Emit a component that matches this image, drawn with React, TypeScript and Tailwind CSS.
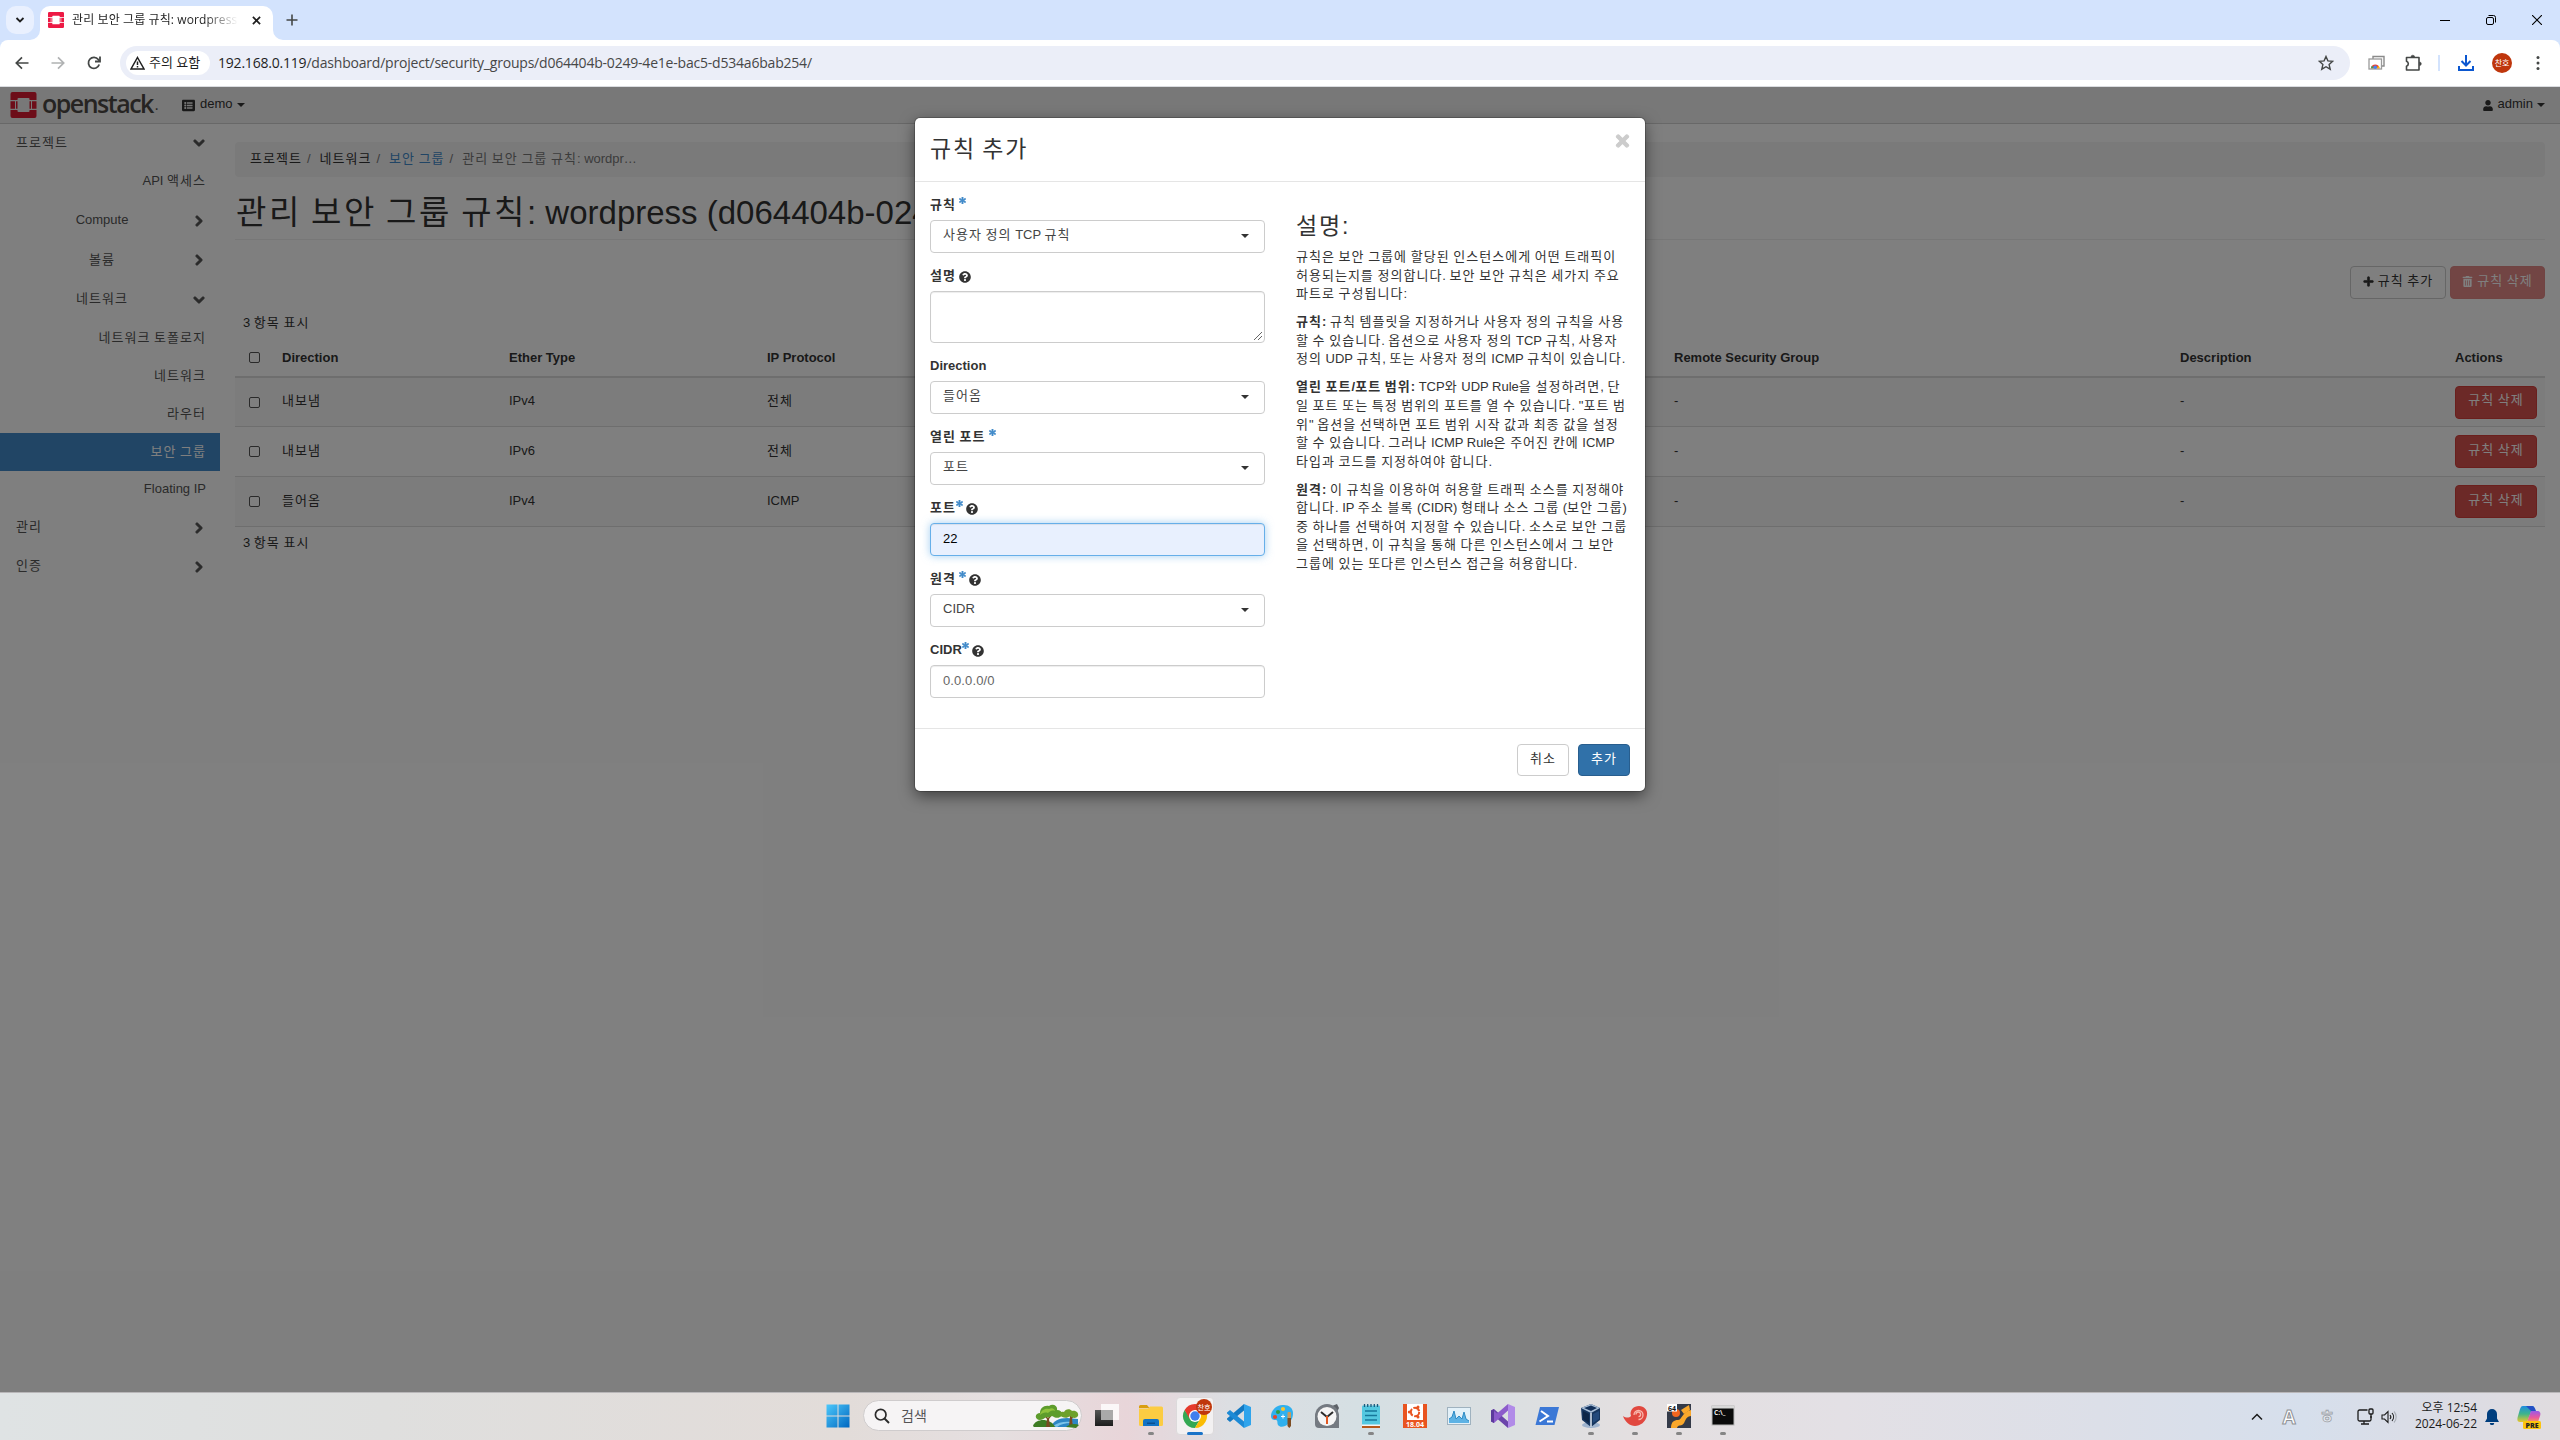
import React, { Fragment } from "react";
import {
  FaAsterisk,
  FaChevronDown,
  FaChevronRight,
  FaPlus,
  FaQuestionCircle,
  FaListAlt,
  FaTimes,
  FaTrashAlt,
  FaUser,
} from "react-icons/fa";

/* Hangul runs get a wider advance than the Latin text beside them. */
function T({ children }: { children: string }) {
  const parts = children.split(/([가-힣]+)/);
  return (
    <>
      {parts.map((p, i) =>
        i % 2 ? (
          <span key={i} className="tracking-[0.078em]">
            {p}
          </span>
        ) : (
          <Fragment key={i}>{p}</Fragment>
        )
      )}
    </>
  );
}

function Caret() {
  return (
    <svg className="h-1 w-2 shrink-0" viewBox="0 0 8 4">
      <path d="M0 0h8L4 4z" fill="currentColor" />
    </svg>
  );
}

/* ---------- browser frame ---------- */

function OpenStackMark({ className, color }: { className: string; color: string }) {
  return (
    <svg className={className} viewBox="0 0 26 26" fill={color}>
      <path d="M2 0h22a2 2 0 0 1 2 2v6h-7V7a1 1 0 0 0-1-1H8a1 1 0 0 0-1 1v1H0V2a2 2 0 0 1 2-2z" />
      <path d="M0 9.200h4.500v7.600H0zM5.500 9.200H7v7.600H5.500zM19 9.200h1.500v7.600H19zM21.500 9.200H26v7.600h-4.500z" />
      <path d="M0 18h7v1a1 1 0 0 0 1 1h10a1 1 0 0 0 1-1v-1h7v6a2 2 0 0 1-2 2H2a2 2 0 0 1-2-2z" />
    </svg>
  );
}

function TabStrip() {
  return (
    <div className="flex h-10 bg-[#d3e3fd]">
      <div className="ml-1.5 mt-1.5 flex h-7 w-7 items-center justify-center rounded-[10px] bg-[#e9f0fe]">
        <svg width="10" height="10" viewBox="0 0 10 10" fill="none" stroke="#1f1f1f" strokeWidth="1.8">
          <path d="M1.500 3l3.500 3.500L8.500 3" />
        </svg>
      </div>
      <svg className="mt-[30px] h-2.5 w-2.5 -ml-1" viewBox="0 0 10 10">
        <path d="M10 0v10H0A10 10 0 0 0 10 0z" fill="#fff" />
      </svg>
      <div className="mt-1.5 flex h-[34px] w-[233px] items-center rounded-t-[10px] bg-white pb-1.5 pl-2 pr-3">
        <OpenStackMark className="h-4 w-4 shrink-0" color="#ed1944" />
        <div className="ml-2 w-[166px] overflow-hidden whitespace-nowrap bg-gradient-to-r from-[#1f1f1f] from-80% to-transparent bg-clip-text text-[12px] leading-4 tracking-[0.1px] text-transparent">
          관리 보안 그룹 규칙: wordpress
        </div>
        <svg className="ml-auto h-[9px] w-[9px]" viewBox="0 0 10 10" stroke="#1f1f1f" strokeWidth="1.9">
          <path d="M1 1l8 8M9 1L1 9" />
        </svg>
      </div>
      <svg className="mt-[30px] h-2.5 w-2.5" viewBox="0 0 10 10">
        <path d="M0 0v10h10A10 10 0 0 1 0 0z" fill="#fff" />
      </svg>
      <svg className="ml-[3px] mt-3.5 h-3 w-3" viewBox="0 0 12 12" stroke="#444746" strokeWidth="1.6">
        <path d="M6 0.500v11M0.500 6h11" />
      </svg>
      <div className="ml-auto mr-[18px] flex h-10 items-center gap-9 text-black">
        <svg width="10" height="10" viewBox="0 0 10 10" stroke="currentColor">
          <path d="M0 5.500h10" />
        </svg>
        <svg width="10" height="10" viewBox="0 0 10 10" fill="none" stroke="currentColor">
          <rect x=".5" y="2.500" width="7" height="7" rx="1.500" />
          <path d="M2.500 0.500h5a2 2 0 0 1 2 2v5" />
        </svg>
        <svg width="10" height="10" viewBox="0 0 10 10" stroke="currentColor" strokeWidth="1.100">
          <path d="M0 0l10 10M10 0L0 10" />
        </svg>
      </div>
    </div>
  );
}

function Toolbar() {
  return (
    <div className="bg-[#d3e3fd]">
      <div className="flex h-[47px] items-center rounded-t-[8px] border-b border-[#dadce0] bg-white pl-3.5">
        <svg width="16" height="16" viewBox="0 0 16 16" fill="none" stroke="#444746" strokeWidth="1.700">
          <path d="M14.500 8H2.500M8 2.300L2.300 8L8 13.700" />
        </svg>
        <svg className="ml-5" width="16" height="16" viewBox="0 0 16 16" fill="none" stroke="#b0b2b3" strokeWidth="1.700">
          <path d="M1.500 8h12M8 2.300L13.700 8L8 13.700" />
        </svg>
        <svg className="ml-5" width="16" height="16" viewBox="0 0 16 16" fill="none" stroke="#444746" strokeWidth="1.800">
          <path d="M13.200 9.500A5.500 5.500 0 1 1 12.300 4.500L13.500 6" />
          <path d="M14 1.500v5h-5" />
        </svg>
        <div className="ml-[18px] flex h-[34px] w-[2230px] items-center rounded-full bg-[#ebeef8] pl-1.5">
          <div className="flex h-6 w-[84px] items-center rounded-full bg-white pl-1">
            <svg width="15" height="14" viewBox="0 0 15 14" fill="none" stroke="#1f1f1f" strokeWidth="1.500">
              <path d="M7.500 1.500L14 13H1z" />
              <path d="M7.500 5.500v3.500M7.500 10v1.500" />
            </svg>
            <span className="ml-1 -mt-0.5 whitespace-nowrap text-[13px] leading-4 text-[#1f1f1f]">주의 요함</span>
          </div>
          <div className="ml-2 whitespace-nowrap text-[14px] leading-5 tracking-[-0.205px] text-[#474747]">
            <span className="text-[#1f1f1f]">192.168.0.119</span>
            /dashboard/project/security_groups/d064404b-0249-4e1e-bac5-d534a6bab254/
          </div>
          <svg className="ml-auto mr-4" width="16" height="16" viewBox="0 0 16 16" fill="none" stroke="#444746" strokeWidth="1.400">
            <path d="M8 1.500l1.900 4.400 4.800.4-3.600 3.200 1.100 4.700L8 11.700l-4.200 2.500 1.100-4.700L1.300 6.300l4.800-.4z" />
          </svg>
        </div>
        <svg className="ml-[18px]" width="17" height="16" viewBox="0 0 17 16" fill="none">
          <path d="M5 4V1.500h11V11h-2" stroke="#8a8a8a" strokeWidth="1.400" />
          <rect x="1" y="4" width="12.500" height="10" fill="#fff" stroke="#9a9a9a" strokeWidth="1.300" />
          <path d="M3 13.200a4.300 4.300 0 0 1 8.500 0z" fill="#ea4335" />
          <path d="M3 13.200a4.300 4.300 0 0 1 .9-2.500l2 2.500z" fill="#34a853" />
          <path d="M11.500 13.200a4.300 4.300 0 0 0-.9-2.500l-2 2.500z" fill="#fbbc04" />
          <circle cx="7.200" cy="12.300" r="1.700" fill="#4285f4" />
        </svg>
        <svg className="ml-[19px]" width="18" height="18" viewBox="0 0 18 18" fill="none" stroke="#444746" strokeWidth="1.600">
          <path d="M2.500 3.500h12.500v12.500H2.500v-3.700a2.700 2.700 0 0 0 0-5.100z" strokeLinejoin="round" />
          <path d="M7 3a1.800 1.800 0 0 1 3.600 0zM15.500 8a1.800 1.800 0 0 1 0 3.600z" fill="#444746" strokeWidth=".6" />
        </svg>
        <div className="ml-[16px] h-4 w-0.5 bg-[#d3e3fd]" />
        <svg className="ml-[18px]" width="16" height="16" viewBox="0 0 16 16" fill="none" stroke="#0b57d0" strokeWidth="2">
          <path d="M8 0v10M3.500 6L8 10.500L12.500 6M1 11v4h14v-4" />
        </svg>
        <div className="ml-[18px] flex h-5 w-5 items-center justify-center rounded-full bg-[#bf360c] text-[8px] leading-3 text-white">찬호</div>
        <svg className="ml-[24px]" width="4" height="16" viewBox="0 0 4 16" fill="#444746">
          <circle cx="2" cy="2.500" r="1.500" />
          <circle cx="2" cy="8" r="1.500" />
          <circle cx="2" cy="13.500" r="1.500" />
        </svg>
      </div>
    </div>
  );
}

/* ---------- dashboard ---------- */

function NavBar() {
  return (
    <div className="flex h-[37px] items-center border-b border-[#d0d0d0] bg-[#f0f0f0] pl-2.5 text-[#333]">
      <OpenStackMark className="h-[26px] w-[27px]" color="#da1a32" />
      <div className="ml-[5px] flex w-[115px] items-end whitespace-nowrap font-['Open_Sans'] text-[25px] font-semibold leading-[30px] tracking-[-1.5px] text-[#4d4845]">
        <span className="-mt-1">openstack</span>
        <span className="pb-0.5 pl-0.5 text-[12px] leading-5">.</span>
      </div>
      <FaListAlt className="ml-[25px] h-[13px] w-[13px]" />
      <span className="ml-[5px] -mt-0.5">demo</span>
      <span className="ml-1"><Caret /></span>
      <FaUser className="ml-auto h-[11px] w-[10px]" />
      <span className="ml-[5px] -mt-0.5">admin</span>
      <span className="ml-1 mr-[15px]"><Caret /></span>
    </div>
  );
}

function SideToggle({ label, open, nested, h }: { label: string; open?: boolean; nested?: boolean; h: string }) {
  return (
    <div className={`flex items-center pl-4 pr-[15px] ${h}`}>
      <span className={nested ? "-mt-px flex-1 pr-1 text-center" : "-mt-px flex-1"}><T>{label}</T></span>
      <span className="flex w-[13px] justify-center">
        {open ? (
          <FaChevronDown className="h-3 w-3" stroke="currentColor" strokeWidth="45" />
        ) : (
          <FaChevronRight className="h-3 w-3" stroke="currentColor" strokeWidth="45" />
        )}
      </span>
    </div>
  );
}

function SideLink({ label, active, h }: { label: string; active?: boolean; h: string }) {
  return (
    <div className={`flex items-center justify-end pr-[14px] ${h} ${active ? "bg-[#428bca] text-white" : ""}`}>
      <span className="-mt-px"><T>{label}</T></span>
    </div>
  );
}

function SideBar() {
  return (
    <div className="w-[220px] shrink-0 whitespace-nowrap text-[#555]">
      <SideToggle label="프로젝트" open h="h-[38px]" />
      <SideLink label="API 액세스" h="h-[39px]" />
      <SideToggle label="Compute" nested h="h-[39px]" />
      <SideToggle label="볼륨" nested h="h-[40px]" />
      <SideToggle label="네트워크" nested open h="h-[39px]" />
      <SideLink label="네트워크 토폴로지" h="h-[38px]" />
      <SideLink label="네트워크" h="h-[38px]" />
      <SideLink label="라우터" h="h-[38px]" />
      <SideLink label="보안 그룹" active h="h-[38px]" />
      <SideLink label="Floating IP" h="h-[37px]" />
      <SideToggle label="관리" h="h-[39px]" />
      <SideToggle label="인증" h="h-[39px]" />
    </div>
  );
}

const COLS = "grid grid-cols-[39px_227px_258px_907px_506px_275px_98px] items-center";

function CheckBox() {
  return <span className="ml-3.5 h-[11px] w-[11px] rounded-[2px] border border-[#555] bg-white" />;
}

const RULES = [
  { dir: "내보냄", ether: "IPv4", proto: "전체", h: "h-[49px] bg-[#f9f9f9]" },
  { dir: "내보냄", ether: "IPv6", proto: "전체", h: "h-[50px]" },
  { dir: "들어옴", ether: "IPv4", proto: "ICMP", h: "h-[50px] bg-[#f9f9f9]" },
];

function Main() {
  return (
    <div className="ml-[15px] w-[2310px] whitespace-nowrap pt-[18px] text-[#333]">
      <div className="flex h-[35px] items-center rounded bg-[#f5f5f5] pb-0.5 pl-[15px]">
        <span><T>프로젝트</T></span>
        <span className="ml-[5px] mr-[9px] text-[#777]">/</span>
        <span><T>네트워크</T></span>
        <span className="ml-[5px] mr-[9px] text-[#777]">/</span>
        <span className="text-[#428bca]"><T>보안 그룹</T></span>
        <span className="ml-[5px] mr-[9px] text-[#777]">/</span>
        <span className="text-[#777]"><T>관리 보안 그룹 규칙: wordpr…</T></span>
      </div>
      <h1 className="flex h-[63px] items-center border-b border-[#eee] pl-px pt-2.5 text-[33px] font-normal leading-9">
        <span><T>관리 보안 그룹 규칙: wordpress (d064404b-0249-4e1e-bac5-d534a6bab254)</T></span>
      </h1>
      <div className="mt-[26px] flex h-[33px] justify-end gap-1">
        <button className="flex w-24 items-center justify-center gap-1 rounded border border-[#ccc] bg-white pb-1">
          <FaPlus className="mt-px h-[11px] w-[11px]" stroke="currentColor" strokeWidth="30" />
          <span><T>규칙 추가</T></span>
        </button>
        <button className="flex w-[95px] items-center justify-center gap-1 rounded border border-[#e08886] bg-[#e48a88] pb-1 text-white">
          <FaTrashAlt className="mt-px h-[11px] w-[11px]" />
          <span><T>규칙 삭제</T></span>
        </button>
      </div>
      <div className="flex h-10 items-center pl-2 pt-2"><span><T>3 항목 표시</T></span></div>
      <div className={`${COLS} h-[39px] border-b-2 border-[#ddd] font-bold`}>
        <CheckBox />
        <span className="pl-2">Direction</span>
        <span className="pl-2">Ether Type</span>
        <span className="pl-2">IP Protocol</span>
        <span className="pl-2">Remote Security Group</span>
        <span className="pl-2">Description</span>
        <span className="pl-2">Actions</span>
      </div>
      {RULES.map((r, i) => (
        <div key={i} className={`${COLS} ${r.h} border-b border-[#ddd]`}>
          <CheckBox />
          <span className="pb-0.5 pl-2"><T>{r.dir}</T></span>
          <span className="pb-0.5 pl-2">{r.ether}</span>
          <span className="pb-0.5 pl-2"><T>{r.proto}</T></span>
          <span className="pb-0.5 pl-2">-</span>
          <span className="pb-0.5 pl-2">-</span>
          <button className="ml-2 flex h-[33px] w-[82px] items-center justify-center rounded border border-[#d43f3a] bg-[#d9534f] pb-1 text-white">
            <span><T>규칙 삭제</T></span>
          </button>
        </div>
      ))}
      <div className="flex h-8 items-center pl-2"><span><T>3 항목 표시</T></span></div>
    </div>
  );
}

/* ---------- dialog ---------- */

function Label({ text, required, tight, help }: { text: string; required?: boolean; tight?: boolean; help?: boolean }) {
  return (
    <label className="flex h-[22px] items-start font-bold leading-[14px]">
      <span><T>{text}</T></span>
      {required && (
        <FaAsterisk
          className={tight ? "-mt-px h-[7px] w-[7px] text-[#428bca]" : "-mt-px ml-[3px] h-[7px] w-[7px] text-[#428bca]"}
          stroke="currentColor"
          strokeWidth="50"
        />
      )}
      {help && <FaQuestionCircle className="ml-[3px] mt-0.5 h-3 w-3" />}
    </label>
  );
}

function Select({ text }: { text: string }) {
  return (
    <div className="mb-4 flex h-[33px] items-center justify-between rounded border border-[#ccc] bg-white pb-0.5 pl-3 pr-[15px]">
      <span className="-mt-px text-[#444]"><T>{text}</T></span>
      <Caret />
    </div>
  );
}

const HELP: { head?: string; lines: string[] }[] = [
  {
    lines: [
      "규칙은 보안 그룹에 할당된 인스턴스에게 어떤 트래픽이",
      "허용되는지를 정의합니다. 보안 보안 규칙은 세가지 주요",
      "파트로 구성됩니다:",
    ],
  },
  {
    head: "규칙:",
    lines: [
      " 규칙 템플릿을 지정하거나 사용자 정의 규칙을 사용",
      "할 수 있습니다. 옵션으로 사용자 정의 TCP 규칙, 사용자",
      "정의 UDP 규칙, 또는 사용자 정의 ICMP 규칙이 있습니다.",
    ],
  },
  {
    head: "열린 포트/포트 범위:",
    lines: [
      " TCP와 UDP Rule을 설정하려면, 단",
      "일 포트 또는 특정 범위의 포트를 열 수 있습니다. \"포트 범",
      "위\" 옵션을 선택하면 포트 범위 시작 값과 최종 값을 설정",
      "할 수 있습니다. 그러나 ICMP Rule은 주어진 칸에 ICMP",
      "타입과 코드를 지정하여야 합니다.",
    ],
  },
  {
    head: "원격:",
    lines: [
      " 이 규칙을 이용하여 허용할 트래픽 소스를 지정해야",
      "합니다. IP 주소 블록 (CIDR) 형태나 소스 그룹 (보안 그룹)",
      "중 하나를 선택하여 지정할 수 있습니다. 소스로 보안 그룹",
      "을 선택하면, 이 규칙을 통해 다른 인스턴스에서 그 보안",
      "그룹에 있는 또다른 인스턴스 접근을 허용합니다.",
    ],
  },
];

function Dialog() {
  return (
    <div className="mt-[31px] h-[673px] w-[730px] rounded-[5px] bg-white text-[#333] shadow-[0_5px_15px_rgba(0,0,0,0.5),0_0_0_1px_rgba(0,0,0,0.2)]">
      <div className="flex h-16 justify-between border-b border-[#e5e5e5] px-[15px]">
        <h3 className="mt-4 text-[23px] leading-[30px]"><T>규칙 추가</T></h3>
        <FaTimes className="mt-[14px] h-[18px] w-[15px] text-[#ccc]" stroke="currentColor" strokeWidth="30" />
      </div>
      <div className="flex h-[547px] border-b border-[#e5e5e5] pl-[15px] pt-4">
        <div className="w-[335px]">
          <Label text="규칙" required />
          <Select text="사용자 정의 TCP 규칙" />
          <Label text="설명" help />
          <div className="mb-4 flex h-[52px] items-end justify-end rounded border border-[#ccc] p-0.5 shadow-[inset_0_1px_1px_rgba(0,0,0,0.075)]">
            <svg width="8" height="8" viewBox="0 0 8 8" stroke="#555" strokeWidth=".9">
              <path d="M0 8l8-8M4 8l4-4" />
            </svg>
          </div>
          <Label text="Direction" />
          <Select text="들어옴" />
          <Label text="열린 포트" required />
          <Select text="포트" />
          <Label text="포트" required tight help />
          <div className="mb-4 flex h-[33px] items-center rounded border border-[#66afe9] bg-[#e8f0fe] pb-px pl-3 text-black shadow-[inset_0_1px_1px_rgba(0,0,0,0.075),0_0_8px_rgba(102,175,233,0.6)]">22</div>
          <Label text="원격" required help />
          <Select text="CIDR" />
          <Label text="CIDR" required tight help />
          <div className="flex h-[33px] items-center rounded border border-[#ccc] pb-px pl-3 text-[#666] shadow-[inset_0_1px_1px_rgba(0,0,0,0.075)]">
            <span className="tracking-[0.1px]">0.0.0.0/0</span>
          </div>
        </div>
        <div className="ml-[31px] whitespace-pre">
          <h3 className="mt-[13px] text-[23px] leading-[30px]"><T>설명:</T></h3>
          <div className="mt-[7px] leading-[18.57px]">
            {HELP.map((p, i) => (
              <p key={i} className="mb-[9.500px]">
                {p.head && <b><T>{p.head}</T></b>}
                {p.lines.map((l, j) => (
                  <Fragment key={j}>
                    {j > 0 && <br />}
                    <T>{l}</T>
                  </Fragment>
                ))}
              </p>
            ))}
          </div>
        </div>
      </div>
      <div className="flex justify-end gap-[9px] px-[15px] pt-[15px]">
        <button className="flex h-8 w-[52px] items-center justify-center rounded border border-[#ccc] bg-white pb-0.5"><span><T>취소</T></span></button>
        <button className="flex h-8 w-[52px] items-center justify-center rounded border border-[#285e8e] bg-[#3071a9] pb-0.5 text-white"><span><T>추가</T></span></button>
      </div>
    </div>
  );
}

/* ---------- task bar ---------- */

function TaskIcon({ children, dot }: { children: React.ReactNode; dot?: boolean }) {
  return (
    <div className="flex h-12 w-11 shrink-0 flex-col items-center pt-[11px]">
      <svg width="24" height="24" viewBox="0 0 24 24" className="shrink-0 overflow-visible">{children}</svg>
      {dot && <span className="mt-1 h-[3px] w-1.5 rounded-full bg-[#858585]" />}
    </div>
  );
}

function Trees() {
  return (
    <svg className="ml-auto mr-0.5" width="46" height="24" viewBox="0 0 46 24">
      <path d="M18 23c2-6 8-9 16-9l11 1v6l-4 2z" fill="#2c86c4" />
      <path d="M20 22c5-4 12-5 20-4l-2 1c-6 0-10 1-14 4z" fill="#7cc4ea" />
      <path d="M0 22c1-4 6-6 10-6s10 2 12 7H1z" fill="#3e7c24" />
      <path d="M13 23l1-8-4-4h2l3 3 3-4h2l-4 5 1 8z" fill="#7a4a22" />
      <path d="M4 15c-3-3 0-6 3-6 0-5 4-8 9-7 4-3 9 0 8 4 5 0 7 5 3 7-3 2-6 0-8-1-2 1-4 2-6 1-3 3-7 4-9 2z" fill="#5d9c2c" />
      <path d="M7 11c1-5 5-7 9-6 3-2 6 0 6 2-3-1-5 0-7 2-3-1-6 0-8 2z" fill="#8fc23c" />
      <path d="M36 22l1-9-2-3h2l2 3 2-3h1l-3 5 1 8z" fill="#7a4a22" />
      <path d="M27 11c-1-3 2-4 4-3 1-3 6-4 8-1 4-1 7 2 6 5-2 3-6 2-8 0-3 3-8 2-10-1z" fill="#6da02c" />
      <path d="M33 23c3-3 9-4 13-2l-3 3z" fill="#3e7c24" />
    </svg>
  );
}

function TaskBar() {
  return (
    <div className="flex h-12 border-t border-[#b9b7b9] bg-[linear-gradient(90deg,#dfe3e4_0%,#dfdfde_15%,#e2dcd9_33%,#e5dfe0_39%,#e8d5d9_44%,#dcdee2_48%,#d5dfe3_53%,#dbdfe1_59%,#e4dfe0_64%,#e3e0e5_72%,#dcdfe8_82%,#d6dfec_90%,#dcdce4_96%,#e0dcdf_100%)] pl-[816px]">
      <TaskIcon>
        <defs>
          <linearGradient id="win" x1="0" y1="0" x2="1" y2="1">
            <stop offset="0" stopColor="#4cc8fb" />
            <stop offset="1" stopColor="#0067c0" />
          </linearGradient>
        </defs>
        <path d="M.5.500h11v11H.5zM12.500.500h11v11h-11zM.5 12.500h11v11H.5zM12.500 12.500h11v11h-11z" fill="url(#win)" />
      </TaskIcon>
      <div className="ml-[3px] mt-[7px] flex h-[31px] w-[219px] shrink-0 items-center rounded-full border border-[#cfcccd] bg-[#f6f4f5] pl-2.5">
        <svg width="16" height="16" viewBox="0 0 16 16" fill="none" stroke="#2b2b2b" strokeWidth="1.700">
          <circle cx="6.700" cy="6.700" r="5.300" />
          <path d="M10.500 10.500L15 15" strokeWidth="2" />
        </svg>
        <span className="ml-[11px] text-[14px] leading-5 text-[#555]">검색</span>
        <Trees />
      </div>
      <div className="ml-[3px] flex">
        <TaskIcon>
          <defs>
            <linearGradient id="tv" x1="0" y1="0" x2="0" y2="1"><stop offset="0" stopColor="#555" /><stop offset="1" stopColor="#1c1c1c" /></linearGradient>
          </defs>
          <rect x="0" y="6" width="18" height="16" fill="url(#tv)" />
          <rect x="6" y="0" width="18" height="16" fill="#fff" opacity=".8" />
          <rect x="6" y="6" width="12" height="10" fill="#a9a9a9" />
        </TaskIcon>
        <TaskIcon dot>
          <path d="M0 2.500A1.500 1.500 0 0 1 1.500 1H8l2.500 3H0z" fill="#d99e10" />
          <path d="M0 4.500h9l2-2h11.500A1.500 1.500 0 0 1 24 4v16.500a1.500 1.500 0 0 1-1.500 1.500h-21A1.500 1.500 0 0 1 0 20.500z" fill="#fccc42" />
          <path d="M4 22v-5a2 2 0 0 1 2-2h12a2 2 0 0 1 2 2v5z" fill="#1272c4" />
          <rect x="8" y="18.500" width="8" height="1.500" fill="#0b4f91" />
        </TaskIcon>
        <div className="flex h-12 w-11 shrink-0 flex-col items-center">
          <div className="mt-1 flex h-[38px] w-[38px] flex-col items-center rounded border border-[#dcdadb] bg-[#f3f1f2] pt-1.5">
            <svg width="24" height="24" viewBox="0 0 24 24" className="shrink-0 overflow-visible">
              <path d="M12 12h-6L1.600 6A12 12 0 0 0 12 24l5.200-9z" fill="#34a853" />
              <path d="M12 6h10.400A12 12 0 0 1 12 24l5.200-9z" fill="#fbbc04" />
              <path d="M12 6H22.400A12 12 0 0 0 1.600 6l5.200 9z" fill="#e53a2c" />
              <circle cx="12" cy="12" r="6" fill="#fff" />
              <circle cx="12" cy="12" r="4.700" fill="#3f7fee" />
              <circle cx="21" cy="3" r="8" fill="#bf360c" />
              <text x="21" y="5.500" fontSize="7.200" textAnchor="middle" fill="#fff">찬호</text>
            </svg>
            <span className="mt-1 h-[3px] w-4 shrink-0 rounded-full bg-[#1a73c8]" />
          </div>
        </div>
        <TaskIcon>
          <path d="M0 15.500V14.500L17 0v6.500L3 18z" fill="#1379c2" />
          <path d="M0 8.500v1L17 24v-6.500L3 6z" fill="#1c8ad6" />
          <path d="M17 0l7 3v18l-7 3z" fill="#2fa4ec" />
        </TaskIcon>
        <TaskIcon>
          <path d="M13 1C6 0 0 6 0 12c0 4 3 4 5 4s1 3 2 5c2 3 7 2 10-1 4-4 5-7 5-11 0-5-4-8-9-8z" fill="#2fb0ee" />
          <circle cx="7" cy="8" r="2.100" fill="#2e9c48" />
          <circle cx="12" cy="5" r="2.100" fill="#f7c531" />
          <circle cx="4" cy="13" r="2.100" fill="#e2472f" />
          <path d="M12 10.500v4M10 12.500h4" stroke="#fff" />
          <rect x="16.500" y="8" width="3.500" height="7" rx="1" fill="#c99a5c" />
          <path d="M16.500 14h3.500v8l-1.700 2-1.800-2z" fill="#7d4d23" />
        </TaskIcon>
        <TaskIcon>
          <path d="M17 2l5-2 2 4-2 4z" fill="#5d6268" />
          <path d="M12 0a12 12 0 0 1 12 12v12H4a4 4 0 0 1-4-4v-8A12 12 0 0 1 12 0z" fill="#747a81" />
          <circle cx="12" cy="12.500" r="9.500" fill="#f5f5f5" />
          <path d="M12 13L6 8M12 13l6-5" stroke="#2b2b2b" strokeWidth="2" />
          <path d="M12 12v8" stroke="#e25822" strokeWidth="2" />
        </TaskIcon>
        <TaskIcon dot>
          <rect x="3" y="1.500" width="18" height="20" rx="1" fill="#54c8e0" />
          <path d="M3 21h18v3H3z" fill="#b5581b" />
          <path d="M3 20.500h18v1.500H3z" fill="#f4f4f4" />
          <path d="M5.500 0v3M8.700 0v3M12 0v3M15.300 0v3M18.500 0v3" stroke="#1c5a7d" strokeWidth="1.300" />
          <path d="M6 7h12M6 11.500h12M6 16h12" stroke="#16779a" strokeWidth="1.500" />
        </TaskIcon>
        <TaskIcon>
          <rect width="24" height="24" fill="#e95420" />
          <rect x="4" width="16" height="16" fill="#fff" />
          <circle cx="12" cy="8" r="4.200" fill="none" stroke="#e95420" strokeWidth="2" strokeDasharray="7.300 1.500" />
          <circle cx="6.300" cy="8" r="1.500" fill="#e95420" />
          <circle cx="15" cy="3" r="1.500" fill="#e95420" />
          <circle cx="15" cy="13" r="1.500" fill="#e95420" />
          <text x="12" y="23.300" fontSize="7" fontWeight="700" textAnchor="middle" fill="#fff">18.04</text>
        </TaskIcon>
        <TaskIcon>
          <rect x=".5" y="3.500" width="23" height="17" fill="#e3f1f9" stroke="#9fb2bf" />
          <path d="M2 19v-4l3-2 2-6 2 8 3-3 3 3 2-7 2 7 3 2v2z" fill="#5db2e4" />
          <path d="M2 15l3-2 2-6 2 8 3-3 3 3 2-7 2 7 3 2" fill="none" stroke="#2c8ac4" />
        </TaskIcon>
        <TaskIcon>
          <path d="M0 7l2-1.500L17 17.500V24L2 18.500 0 17z" fill="none" />
          <path d="M0 6.500L3 5l14 12.500V24L6 14.500l-3 2.500v-8z" fill="#6b44ab" />
          <path d="M0 17.500L3 19 17 6.500V0L6 9.500 3 7z" fill="#8c5bcb" />
          <path d="M0 6.500L3 5v14l-3-1.500z" fill="#5c3a9c" />
          <path d="M17 0l7 3v18l-7 3z" fill="#b18be8" />
        </TaskIcon>
        <TaskIcon>
          <path d="M5 3h19l-4.500 18H.5z" fill="#3b78d6" />
          <path d="M6 7l7 5-8.500 5.500M12 17.500h6" stroke="#fff" strokeWidth="2" fill="none" />
        </TaskIcon>
        <TaskIcon dot>
          <ellipse cx="12" cy="21" rx="9" ry="3" fill="#9fb4cf" />
          <path d="M2 4l10-4 9 4v12l-9 7-9-7z" fill="#16365f" />
          <path d="M2 4l10 5 9-5-9-4z" fill="#a9bfd8" />
          <path d="M5 4l7-2.500L18 4l-6 3z" fill="#12305a" />
          <path d="M12 9v14" stroke="#dfe8f2" strokeWidth="1.500" />
          <path d="M4 7l6 3v9l-6-4z" fill="#0d2647" />
          <path d="M20 7l-6 3v9l6-4z" fill="#234a7c" />
        </TaskIcon>
        <TaskIcon dot>
          <path d="M0 12c3 2 6 2 8 0-2-6 3-10 8-10s9 4 8 9c-1 7-7 11-12 11S2 18 0 12z" fill="#e1483f" />
          <path d="M11 11a4.500 4.500 0 1 1 4.500 4.500M13 10.500a2.300 2.300 0 1 1 2.500 2.200" fill="none" stroke="#f9b8ae" strokeWidth="1.300" />
        </TaskIcon>
        <TaskIcon dot>
          <rect width="24" height="24" fill="#343a48" />
          <path d="M4 24c0-6 3-8 7-8s4-8 13-10v6c-7 1-5 7-9 9-3 1-4 0-5 3z" fill="#f9a72b" />
          <circle cx="9" cy="9" r="4" fill="#f2661f" />
          <path d="M14 6l8-5 1 5-6 4z" fill="#f9a72b" />
          <rect width="10" height="7.500" fill="#fff" />
          <text x="5" y="6.500" fontSize="7" fontWeight="700" textAnchor="middle" fill="#111">64</text>
        </TaskIcon>
        <TaskIcon dot>
          <rect x="1" y="2" width="22" height="19" fill="#0b0b0b" stroke="#b8b8b8" />
          <rect x="1" y="2" width="22" height="2.500" fill="#d8d8d8" />
          <text x="3" y="11" fontSize="6.500" fontWeight="700" fill="#eee">C:\_</text>
        </TaskIcon>
      </div>
      <div className="ml-auto flex items-center text-[#1b1b1b]">
        <svg width="12" height="8" viewBox="0 0 12 8" fill="none" stroke="currentColor" strokeWidth="1.500"><path d="M1 6.500l5-5 5 5" /></svg>
        <span className="ml-[18px] w-[16px] text-center text-[19px] font-bold leading-5 text-white [-webkit-text-stroke:1px_#8f9296]">A</span>
        <span className="ml-[21px] w-[18px] text-center text-[17px] font-bold leading-5 text-[#e8ebf0] [-webkit-text-stroke:0.800px_#9da2a8]">ㅎ</span>
        <svg className="ml-[21px]" width="17" height="17" viewBox="0 0 17 17" fill="none" stroke="currentColor" strokeWidth="1.300">
          <path d="M10.500 2H2.500A1.500 1.500 0 0 0 1 3.500v8A1.500 1.500 0 0 0 2.500 13h10a1.500 1.500 0 0 0 1.500-1.500V8M7 13v3M4 16h8" />
          <rect x="12" y="1" width="4" height="5" rx="1" />
          <path d="M14 6v4" />
        </svg>
        <svg className="ml-[7px]" width="16" height="14" viewBox="0 0 16 14" fill="none" stroke="currentColor" strokeWidth="1.100">
          <path d="M1 5h2.500L7 1.500v11L3.500 9H1z" />
          <path d="M9 5a3 3 0 0 1 0 4M11 3a6 6 0 0 1 0 8" />
          <path d="M13 1.500a8 8 0 0 1 0 11" stroke="#a8adb5" />
        </svg>
        <div className="ml-4 w-[64px] -translate-y-px whitespace-nowrap text-right text-[12px] leading-4 tracking-[-0.050px]">
          오후 12:54
          <br />
          2024-06-22
        </div>
        <svg className="ml-2" width="14" height="16" viewBox="0 0 14 16" fill="#003e7e">
          <path d="M7 0a5 5 0 0 1 5 5v4.500l2 3.500H0l2-3.500V5a5 5 0 0 1 5-5zM4.800 14h4.400a2.200 2.200 0 0 1-4.400 0z" />
        </svg>
        <svg className="ml-[18px] mr-[19px]" width="24" height="24" viewBox="0 0 24 24">
          <defs>
            <linearGradient id="cpa" x1="0" y1="0" x2="0" y2="1"><stop offset="0" stopColor="#1d8de0" /><stop offset=".5" stopColor="#3fb58a" /><stop offset="1" stopColor="#e8c62c" /></linearGradient>
            <linearGradient id="cpb" x1="0" y1="0" x2="0" y2="1"><stop offset="0" stopColor="#9a5ae8" /><stop offset=".6" stopColor="#ea5a9c" /><stop offset="1" stopColor="#f39a5c" /></linearGradient>
          </defs>
          <path d="M6 1h9c2 0 3 2 3 5l-4 1-4 10H3c-3 0-3-3-2-6l2-7c1-2 1-3 3-3z" fill="url(#cpa)" />
          <path d="M14 6h6c3 0 4 2 3 5l-2 6H10z" fill="url(#cpb)" />
          <path d="M9 1h6c2 0 3 2 4 5h-5z" fill="#2350c4" />
          <rect x="6" y="16" width="18" height="8" rx="1.500" fill="#fcc40e" />
          <text x="15" y="22.500" fontSize="7" fontWeight="800" textAnchor="middle" fill="#222">PRE</text>
        </svg>
      </div>
    </div>
  );
}

export default function App() {
  return (
    <div className="flex h-[1440px] w-[2560px] flex-col overflow-hidden bg-white font-['Open_Sans','Noto_Sans_CJK_KR',sans-serif]">
      <TabStrip />
      <Toolbar />
      <div className="relative h-[1305px] shrink-0 overflow-hidden bg-white font-['Liberation_Sans','Noto_Sans_CJK_KR',sans-serif] text-[13px] leading-[18px]">
        <NavBar />
        <div className="flex">
          <SideBar />
          <Main />
        </div>
        <div className="absolute inset-0 flex items-start justify-center bg-black/50">
          <Dialog />
        </div>
      </div>
      <TaskBar />
    </div>
  );
}
